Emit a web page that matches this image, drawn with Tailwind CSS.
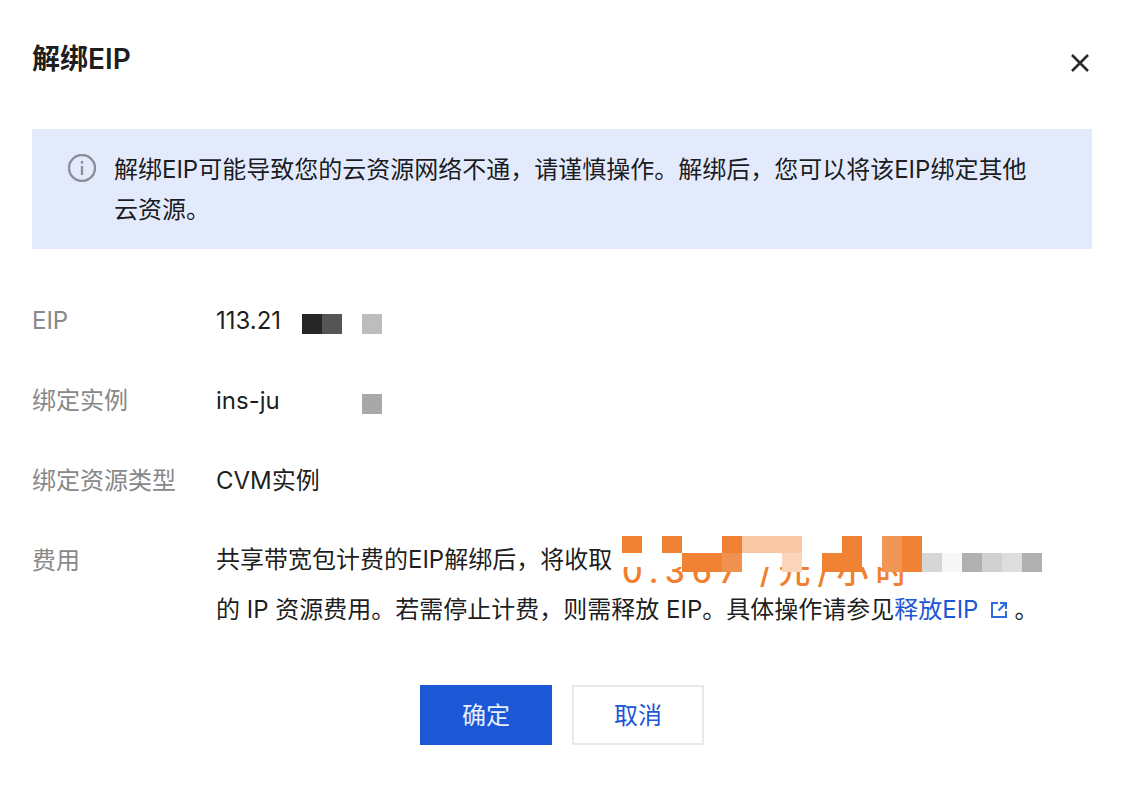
<!doctype html>
<html lang="zh-CN">
<head>
<meta charset="utf-8">
<script src="https://cdn.jsdelivr.net/npm/@tailwindcss/browser@4"></script>
</head>
<body class="m-0 bg-white font-['Inter','Noto_Sans_CJK_SC',sans-serif] text-[rgba(0,0,0,0.9)]">
<div class="w-[1126px] h-[792px] overflow-hidden pl-8 pr-[34px] box-border">
  <header class="h-[129px] flex items-start justify-between">
    <h1 class="mt-[39px] text-[28px] leading-[40px] font-semibold">解绑EIP</h1>
    <svg class="mt-[53px] mr-[2px] w-5 h-5" viewBox="0 0 20 20" fill="none" stroke="#2b2b2b" stroke-width="2.6"><path d="M2 2 18 18M18 2 2 18"/></svg>
  </header>

  <div class="h-[120px] bg-[#e3eafc] pt-[21px] pl-9 pr-[60px] flex gap-[18px] text-2xl leading-[40px] box-border">
    <svg class="mt-[4px] w-7 h-7 shrink-0" viewBox="0 0 28 28" fill="none" stroke="#8a8f99" stroke-width="2.4"><circle cx="14" cy="14" r="13"/><path d="M14 12v9" stroke-width="2.4"/><path d="M14 7v2.6" stroke-width="2.4"/></svg>
    <p>解绑EIP可能导致您的云资源网络不通，请谨慎操作。解绑后，您可以将该EIP绑定其他云资源。</p>
  </div>

  <dl class="mt-[52px] text-2xl leading-[40px]">
    <div class="flex mb-10">
      <dt class="w-[184px] text-[#888]">EIP</dt>
      <dd class="flex items-center">
        <span class="w-[68px] whitespace-nowrap">113.21</span>
        <span class="ml-[18px] w-5 h-5 bg-[#262626] mt-[5px]"></span>
        <span class="w-5 h-5 bg-[#555555] mt-[5px]"></span>
        <span class="ml-5 w-5 h-5 bg-[#bdbdbd] mt-[5px]"></span>
      </dd>
    </div>
    <div class="flex mb-10">
      <dt class="w-[184px] text-[#888]">绑定实例</dt>
      <dd class="flex items-center">
        <span class="w-[65px] whitespace-nowrap">ins-ju</span>
        <span class="ml-[81px] w-5 h-5 bg-[#a8a8a8] mt-[5px]"></span>
      </dd>
    </div>
    <div class="flex mb-10">
      <dt class="w-[184px] text-[#888]">绑定资源类型</dt>
      <dd>CVM实例</dd>
    </div>
    <div class="flex">
      <dt class="w-[184px] text-[#888]">费用</dt>
      <dd class="relative w-[840px] leading-[50px] -mt-[6px]">
        <p>共享带宽包计费的EIP解绑后，将收取</p>
        <p>的 IP 资源费用。若需停止计费，则需释放 EIP。具体操作请参见<a class="text-[#1c57d6]">释放EIP<svg class="inline-block ml-3 mr-[6px] w-[18px] h-[18px] align-[-1px]" viewBox="0 0 18 18" fill="none" stroke="#2e6bdc" stroke-width="2"><path d="M8 2H2v14h14v-6"/><path d="M10 2h6v6M16 2 8.500 9.500"/></svg></a>。</p>
        <div class="absolute left-[374px] top-[-4px] w-[452px] h-[60px]">
          <span class="absolute left-[32px] top-[21px] text-[32px] leading-[40px] tracking-[7px] font-medium text-[#f0802f] whitespace-nowrap">0.367 /元/小时</span>
          <div class="absolute left-[32px] top-0 w-[300px] h-[36px] bg-white"></div>
          <div class="absolute left-[32px] top-[5px] flex h-[17px]">
            <i class="w-5 bg-[#f08233]"></i><i class="w-5"></i><i class="w-5 bg-[#f08233]"></i><i class="w-10"></i><i class="w-5 bg-[#f08233]"></i><i class="w-[60px] bg-[#f8c7a3]"></i><i class="w-10"></i><i class="w-5 bg-[#f08233]"></i><i class="w-5"></i><i class="w-5 bg-[#f29655]"></i><i class="w-5 bg-[#f08233]"></i>
          </div>
          <div class="absolute left-[92px] top-[22px] flex h-[19px]">
            <i class="w-10 bg-[#f08233]"></i><i class="w-5 bg-[#f29050]"></i><i class="w-10"></i><i class="w-5 bg-[#fbd5ba]"></i><i class="w-5"></i><i class="w-10 bg-[#f08233]"></i><i class="w-5"></i><i class="w-5 bg-[#f29655]"></i><i class="w-5 bg-[#f08233]"></i><i class="w-5 bg-[#d6d6d6]"></i><i class="w-5 bg-[#f7f7f7]"></i><i class="w-5 bg-[#b0b0b0]"></i><i class="w-5 bg-[#d0d0d0]"></i><i class="w-5 bg-[#dddddd]"></i><i class="w-5 bg-[#b0b0b0]"></i>
          </div>
        </div>
      </dd>
    </div>
  </dl>

  <div class="mt-[50px] flex justify-center gap-5 text-2xl">
    <button class="w-[132px] h-[60px] pt-[2px] bg-[#1c57d6] text-white/90">确定</button>
    <button class="w-[132px] h-[60px] pt-[2px] bg-white border-2 border-[#e8e8ef] text-[#1c57d6]">取消</button>
  </div>
</div>
</body>
</html>
